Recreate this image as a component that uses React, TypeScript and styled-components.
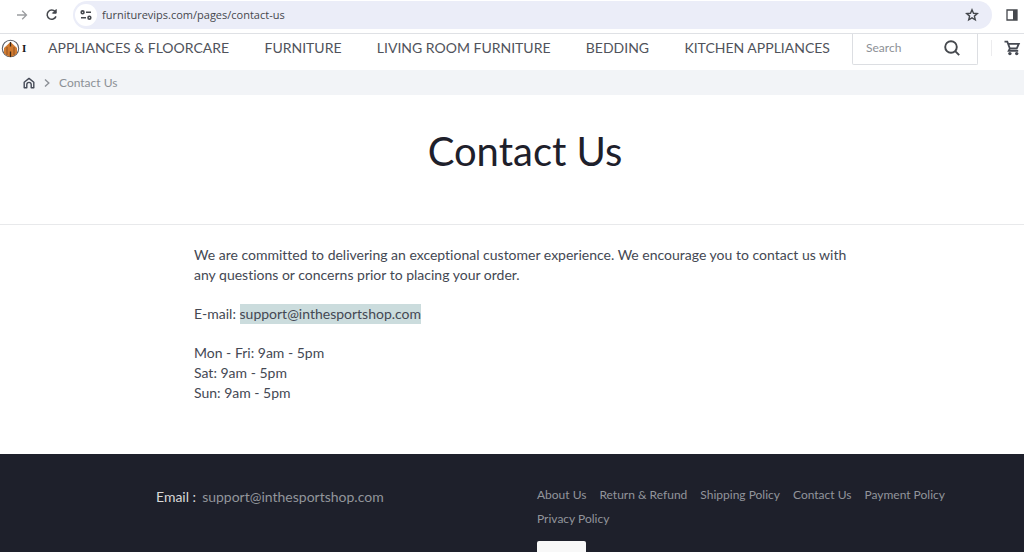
import React from "react";
import styled, { createGlobalStyle } from "styled-components";

const GlobalStyle = createGlobalStyle`
  * { box-sizing: border-box; }
  body {
    margin: 0;
    background: #ffffff;
    color: #444853;
    font-family: Lato, "Liberation Sans", sans-serif;
    font-size: 14px;
    font-variant-ligatures: none;
  }
  #root {
    display: flex;
    flex-direction: column;
    min-height: 100vh;
  }
  a { color: inherit; text-decoration: none; }
  h1, p { margin: 0; }
  svg { display: block; flex: none; }
`;

const BrowserBar = styled.div`
  display: flex;
  align-items: center;
  gap: 12px;
  height: 34px;
  padding: 0 4px 4px 13px;
  border-bottom: 1px solid #dfe1e5;
`;

const IconButton = styled.button<{ $color?: string }>`
  display: flex;
  align-items: center;
  justify-content: center;
  flex: none;
  padding: 0;
  border: 0;
  background: none;
  color: ${(p) => p.$color ?? "#45484d"};
`;

const AddressBar = styled.div`
  display: flex;
  align-items: center;
  flex: 1;
  height: 28px;
  padding: 0 13px 0 2px;
  border-radius: 14px;
  background: #ebedf8;
`;

const SiteInfo = styled(IconButton)`
  width: 22px;
  height: 22px;
  border-radius: 50%;
  background: #ffffff;
`;

const AddressInput = styled.input`
  flex: 1;
  min-width: 0;
  padding: 0 5px;
  border: 0;
  outline: 0;
  background: none;
  color: #46484d;
  font-family: "Open Sans", sans-serif;
  font-size: 11px;
`;

const Header = styled.header`
  display: flex;
  align-items: flex-start;
  height: 36px;
  overflow: hidden;
`;

const Brand = styled.a`
  display: flex;
  align-items: center;
  gap: 2px;
  width: 48px;
  height: 28px;
  padding-left: 1px;
  color: #17171b;
  font: bold 11px "Liberation Serif", serif;
`;

const Nav = styled.nav`
  display: flex;
  flex: 1;
  justify-content: space-between;
  padding-right: 22px;
  font-size: 14px;
  line-height: 28px;
  white-space: nowrap;
  color: #50535b;
`;

const SearchForm = styled.form`
  display: flex;
  align-items: center;
  width: 126px;
  height: 31px;
  padding: 0 17px 3px 13px;
  border: 1px solid #dcdee2;
  border-top: 0;
  border-radius: 0 0 2px 2px;
`;

const SearchInput = styled.input`
  flex: 1;
  min-width: 0;
  padding: 0;
  border: 0;
  outline: 0;
  background: none;
  color: #50535b;
  font-family: inherit;
  font-size: 12px;
  &::placeholder { color: #8d9096; opacity: 1; }
`;

const CartArea = styled.div`
  display: flex;
  align-items: center;
  width: 46px;
  height: 28px;
  padding-left: 13px;
`;

const CartLink = styled.a`
  display: flex;
  height: 16px;
  padding-left: 12px;
  border-left: 1px solid #ececee;
  color: #454952;
`;

const Breadcrumb = styled.nav`
  display: flex;
  align-items: center;
  gap: 8px;
  height: 25px;
  padding-left: 23px;
  background: #f2f4f7;
  color: #8c9096;
  font-size: 12px;
`;

const HomeLink = styled.a`
  color: #454a57;
`;

const Hero = styled.section`
  padding: 32px 0 49px 26px;
  border-bottom: 1px solid #e8e9eb;
  text-align: center;
`;

const Title = styled.h1`
  color: #1e202b;
  font-size: 40px;
  font-weight: 400;
  line-height: 48px;
`;

const Main = styled.main`
  padding: 20px 0 51px 26px;
`;

const Article = styled.div`
  display: flex;
  flex-direction: column;
  gap: 19px;
  max-width: 662px;
  margin: 0 auto;
  line-height: 20px;
`;

const Selected = styled.a`
  display: inline-block;
  background: #cbdcdd;
`;

const Footer = styled.footer`
  display: grid;
  grid-template-columns: minmax(0, 381px) 1fr;
  flex: 1;
  padding: 29px 68px 0 156px;
  background: #1e202b;
  color: #92959b;
`;

const FooterEmail = styled.p`
  line-height: 28px;
`;

const FooterLabel = styled.span`
  margin-right: 6px;
  color: #d9d9d9;
`;

const FooterLinks = styled.nav`
  display: flex;
  flex-wrap: wrap;
  column-gap: 13px;
  font-size: 12px;
  line-height: 24px;
`;

const Badge = styled.div`
  width: 49px;
  height: 11px;
  margin-top: 10px;
  border-radius: 2px 2px 0 0;
  background: #f8f8f8;
`;

const categories = [
  "APPLIANCES & FLOORCARE",
  "FURNITURE",
  "LIVING ROOM FURNITURE",
  "BEDDING",
  "KITCHEN APPLIANCES",
];

const policies = [
  "About Us",
  "Return & Refund",
  "Shipping Policy",
  "Contact Us",
  "Payment Policy",
  "Privacy Policy",
];

const Logo = () => (
  <svg width="19" height="19" viewBox="0 0 19 19" fill="none">
    <circle cx="9.5" cy="9.5" r="8.2" fill="#fff" stroke="#5d6068" strokeWidth="1.1" />
    <path d="M9.5 3 3 9v5.2l3 2.6 3.5 1.2 3.5-1.2 3-2.6V9z" fill="#d07a30" />
    <path d="M9.5 3v4.5M9.5 12.5V18" stroke="#3c2818" strokeWidth="1.3" />
    <path d="M6 8v8M13 8v8" stroke="#8f5222" strokeWidth="1" />
  </svg>
);

export default function App() {
  return (
    <>
      <GlobalStyle />
      <BrowserBar>
        <IconButton aria-label="Forward" $color="#9b9da0">
          <svg width="18" height="14" viewBox="0 0 18 14" fill="none" stroke="currentColor" strokeWidth="1.3">
            <path d="M4 7h9.5M9.2 2.7 13.5 7l-4.3 4.3" />
          </svg>
        </IconButton>
        <IconButton aria-label="Reload">
          <svg width="18" height="16" viewBox="0 0 18 16" fill="none" stroke="currentColor" strokeWidth="1.5">
            <path d="M12.2 4.6A4.6 4.6 0 1 0 13 9.4" />
            <path d="M13.2 2.5v3.7H9.5z" fill="currentColor" strokeWidth="1" />
          </svg>
        </IconButton>
        <AddressBar>
          <SiteInfo aria-label="View site information">
            <svg width="12" height="12" viewBox="0 0 12 12" fill="none" stroke="currentColor" strokeWidth="1.6">
              <circle cx="2.6" cy="3.3" r="1.4" />
              <path d="M6 3.3h5M1 8.7h5" />
              <circle cx="9.4" cy="8.7" r="1.4" />
            </svg>
          </SiteInfo>
          <AddressInput aria-label="Address" defaultValue="furniturevips.com/pages/contact-us" />
          <IconButton aria-label="Bookmark">
            <svg width="14" height="14" viewBox="0 0 14 14" fill="none" stroke="currentColor" strokeWidth="1.4">
              <path d="m7 1.8 1.5 3.5 3.8.3-2.9 2.5.9 3.7L7 9.8l-3.3 2 .9-3.7-2.9-2.5 3.8-.3z" />
            </svg>
          </IconButton>
        </AddressBar>
        <IconButton aria-label="Side panel">
          <svg width="16" height="14" viewBox="0 0 16 14">
            <path d="M3 2h10v10H3z" fill="none" stroke="currentColor" strokeWidth="1.3" />
            <path d="M9 2h4v10H9z" fill="currentColor" />
          </svg>
        </IconButton>
      </BrowserBar>

      <Header>
        <Brand href="#" aria-label="Home page">
          <Logo />I
        </Brand>
        <Nav aria-label="Categories">
          {categories.map((name) => (
            <a href="#" key={name}>{name}</a>
          ))}
        </Nav>
        <SearchForm role="search">
          <SearchInput aria-label="Search" placeholder="Search" />
          <IconButton aria-label="Submit search" type="button">
            <svg width="16" height="16" viewBox="0 0 16 16" fill="none" stroke="currentColor" strokeWidth="1.9">
              <circle cx="7" cy="7" r="5.8" />
              <path d="m11.2 11.2 4 4" />
            </svg>
          </IconButton>
        </SearchForm>
        <CartArea>
          <CartLink href="#" aria-label="Cart">
            <svg width="17" height="16" viewBox="0 0 17 16" fill="none" stroke="currentColor" strokeWidth="1.8">
              <path d="M.5 1.7h2.8l2.6 6.8h6.8l2.1-4.7H4.2M5.9 8.5l-1.2 2.3h9.5" />
              <circle cx="5.9" cy="13.6" r="1.7" fill="currentColor" stroke="none" />
              <circle cx="12.7" cy="13.6" r="1.7" fill="currentColor" stroke="none" />
            </svg>
          </CartLink>
        </CartArea>
      </Header>

      <Breadcrumb aria-label="Breadcrumb">
        <HomeLink href="#" aria-label="Home">
          <svg width="12" height="12" viewBox="0 0 12 12" fill="none" stroke="currentColor" strokeWidth="1.4">
            <path d="M1.2 5.2 6 1.4l4.8 3.8v5.5H8.2V7.6a2.2 2.2 0 0 0-4.4 0v3.1H1.2z" strokeLinejoin="round" />
          </svg>
        </HomeLink>
        <svg width="8" height="10" viewBox="0 0 8 10" fill="none" stroke="currentColor" strokeWidth="1.4">
          <path d="m2 1.5 3.8 3.5L2 8.5" />
        </svg>
        <span>Contact Us</span>
      </Breadcrumb>

      <Hero>
        <Title>Contact Us</Title>
      </Hero>

      <Main>
        <Article>
          <p>
            We are committed to delivering an exceptional customer experience. We encourage you to contact us with
            any questions or concerns prior to placing your order.
          </p>
          <p>
            E-mail: <Selected href="mailto:support@inthesportshop.com">support@inthesportshop.com</Selected>
          </p>
          <p>
            Mon - Fri: 9am - 5pm
            <br />
            Sat: 9am - 5pm
            <br />
            Sun: 9am - 5pm
          </p>
        </Article>
      </Main>

      <Footer>
        <FooterEmail>
          <FooterLabel>Email :</FooterLabel>
          <a href="mailto:support@inthesportshop.com">support@inthesportshop.com</a>
        </FooterEmail>
        <div>
          <FooterLinks aria-label="Store information">
            {policies.map((name) => (
              <a href="#" key={name}>{name}</a>
            ))}
          </FooterLinks>
          <Badge />
        </div>
      </Footer>
    </>
  );
}
